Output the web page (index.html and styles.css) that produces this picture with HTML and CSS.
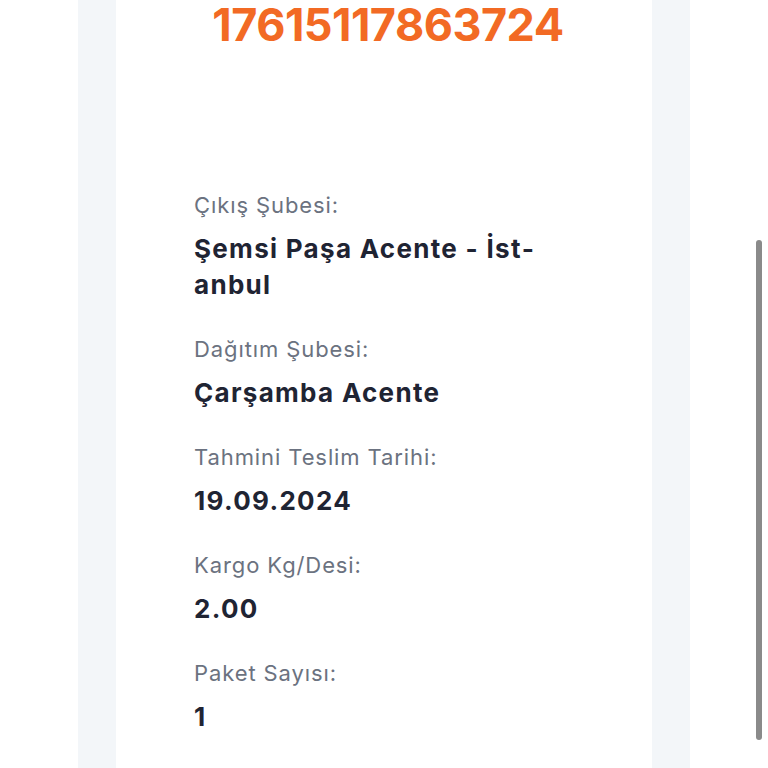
FILE: index.html
```html
<!DOCTYPE html>
<html lang="tr">
<head>
    <meta charset="UTF-8">
    <meta name="viewport" content="width=device-width, initial-scale=1.0">
    <title>Kargo Takip</title>
    <link rel="stylesheet" href="styles.css">
</head>
<body>

    <div class="page">
        <div class="card">
            <!-- Tracking number -->
            <div class="tracking-no">17615117863724</div>

            <!-- Shipment details -->
            <div class="details">
                <div class="item">
                    <div class="label">Çıkış Şubesi:</div>
                    <div class="value">Şemsi Paşa Acente - İst&shy;anbul</div>
                </div>
                <div class="item">
                    <div class="label">Dağıtım Şubesi:</div>
                    <div class="value">Çarşamba Acente</div>
                </div>
                <div class="item">
                    <div class="label">Tahmini Teslim Tarihi:</div>
                    <div class="value">19.09.2024</div>
                </div>
                <div class="item">
                    <div class="label">Kargo Kg/Desi:</div>
                    <div class="value">2.00</div>
                </div>
                <div class="item">
                    <div class="label">Paket Sayısı:</div>
                    <div class="value">1</div>
                </div>
            </div>
        </div>
    </div>

    <!-- overlay scrollbar -->
    <div class="scrollbar"></div>

</body>
</html>
```

FILE: styles.css
```css
body {
    font-family: Inter, "Noto Sans", sans-serif;
    margin: 0;
    background: #ffffff;
    overflow: hidden;
}

.page {
    width: 536px;
    margin-left: 78px;
    padding: 0 38px;
    background: #f3f6f9;
    min-height: 768px;
}

.card {
    background: #ffffff;
    min-height: 768px;
}

.tracking-no {
    color: #f26a24;
    font-size: 45px;
    font-weight: 700;
    line-height: 46px;
    text-align: center;
    letter-spacing: -0.5px;
    padding: 2px 0 0 8px;
}

.details {
    padding: 142px 100px 0 78px;
}

.item {
    margin-bottom: 31px;
}

.label {
    color: #6b7280;
    font-size: 22px;
    line-height: 30px;
    letter-spacing: 0.9px;
    margin-bottom: 11px;
}

.value {
    color: #1f2433;
    font-size: 26px;
    font-weight: 700;
    line-height: 36px;
    letter-spacing: 1.3px;
    hyphens: manual;
}

.scrollbar {
    position: absolute;
    top: 240px;
    left: 756px;
    width: 6px;
    height: 500px;
    background: #8a8a8a;
    border-radius: 3px;
}
```
